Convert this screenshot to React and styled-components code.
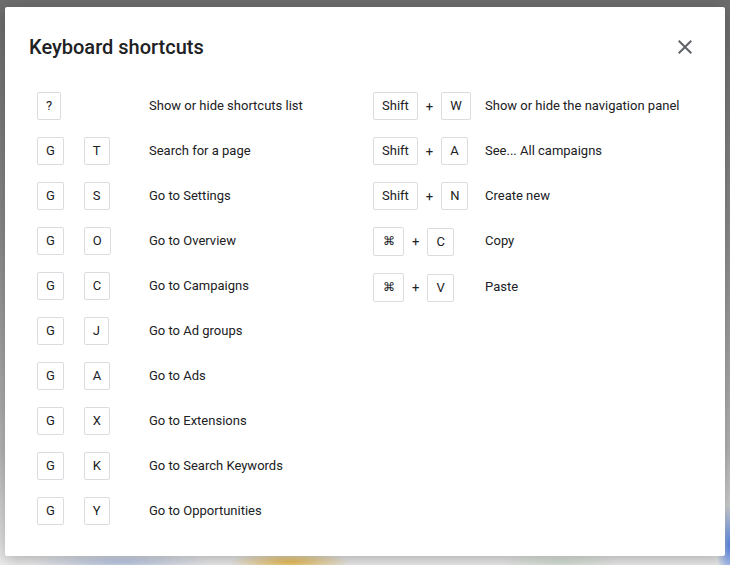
import React from 'react';
import styled, { createGlobalStyle } from 'styled-components';

const GlobalStyle = createGlobalStyle`
  html, body {
    margin: 0;
    padding: 0;
  }
  body {
    font-family: Roboto, "Liberation Sans", Arial, sans-serif;
    color: #202124;
  }
`;

// dimmed page behind the dialog
const Backdrop = styled.div`
  width: 730px;
  height: 565px;
  box-sizing: border-box;
  padding: 7px 5px 9px 5px;
  background:
    radial-gradient(ellipse 60px 10px at 290px 562px, rgba(236, 184, 60, 0.85), transparent),
    radial-gradient(ellipse 90px 10px at 120px 562px, rgba(170, 190, 230, 0.7), transparent),
    radial-gradient(ellipse 60px 10px at 560px 562px, rgba(200, 220, 200, 0.6), transparent),
    radial-gradient(ellipse 14px 40px at 730px 545px, rgba(80, 130, 230, 0.95), transparent),
    linear-gradient(to bottom, #6c6c6c 0, #8a8a8a 40%, #b8b8b8 80%, #e6e6e6 97%, #eeeeee 100%);
`;

const Dialog = styled.div`
  height: 100%;
  background: #fff;
  border-radius: 2px;
  box-shadow: 0 4px 16px rgba(0, 0, 0, 0.25);
  display: flex;
  flex-direction: column;
`;

const Header = styled.div`
  display: flex;
  align-items: center;
  justify-content: space-between;
  padding: 28px 28px 0 24px;
`;

const Title = styled.h1`
  margin: 0;
  font-size: 20px;
  line-height: 24px;
  font-weight: 500;
  color: #202124;
`;

const CloseButton = styled.button`
  width: 24px;
  height: 24px;
  padding: 0;
  border: none;
  background: none;
  color: #5f6368;
  cursor: pointer;
  display: flex;
  svg { display: block; }
`;

// two columns of shortcuts
const Body = styled.div`
  display: grid;
  grid-template-columns: 336px 1fr;
  align-items: start;
  padding: 33px 0 0 32px;
`;

const Column = styled.div`
  display: flex;
  flex-direction: column;
  gap: 17px;
`;

const Row = styled.div`
  display: flex;
  align-items: center;
`;

const Keys = styled.div`
  width: 112px;
  flex-shrink: 0;
  display: flex;
  align-items: center;
  gap: ${(p) => (p.$combo ? '0' : '20px')};
`;

const Key = styled.span`
  box-sizing: border-box;
  height: ${(p) => (p.$symbol ? '29px' : '28px')};
  min-width: ${(p) => (p.$symbol ? '31px' : '0')};
  padding: 0 8px;
  border: 1px solid #dadce0;
  border-radius: 2px;
  font-size: ${(p) => (p.$symbol ? '12px' : '13px')};
  line-height: ${(p) => (p.$symbol ? '27px' : '26px')};
  text-align: center;
  color: #202124;
`;

const Plus = styled.span`
  margin: 0 8px;
  font-size: 13px;
  color: #202124;
`;

const Label = styled.span`
  font-size: 13px;
  line-height: 16px;
  margin-top: -1px;
  color: #202124;
  white-space: nowrap;
`;

const sequences = [
  [['?'], 'Show or hide shortcuts list'],
  [['G', 'T'], 'Search for a page'],
  [['G', 'S'], 'Go to Settings'],
  [['G', 'O'], 'Go to Overview'],
  [['G', 'C'], 'Go to Campaigns'],
  [['G', 'J'], 'Go to Ad groups'],
  [['G', 'A'], 'Go to Ads'],
  [['G', 'X'], 'Go to Extensions'],
  [['G', 'K'], 'Go to Search Keywords'],
  [['G', 'Y'], 'Go to Opportunities'],
];

const combos = [
  ['Shift', 'W', 'Show or hide the navigation panel'],
  ['Shift', 'A', 'See... All campaigns'],
  ['Shift', 'N', 'Create new'],
  ['⌘', 'C', 'Copy'],
  ['⌘', 'V', 'Paste'],
];

const CloseIcon = () => (
  <svg width="24" height="24" viewBox="0 0 24 24" fill="currentColor">
    <path d="M19 6.41L17.59 5 12 10.59 6.41 5 5 6.41 10.59 12 5 17.59 6.41 19 12 13.41 17.59 19 19 17.59 13.41 12z" />
  </svg>
);

const App = () => {
  return (
    <Backdrop>
      <GlobalStyle />
      <Dialog>
        <Header>
          <Title>Keyboard shortcuts</Title>
          <CloseButton aria-label="Close"><CloseIcon /></CloseButton>
        </Header>
        <Body>
          <Column>
            {sequences.map(([keys, label]) => (
              <Row key={label}>
                <Keys>
                  {keys.map((k) => <Key key={k}>{k}</Key>)}
                </Keys>
                <Label>{label}</Label>
              </Row>
            ))}
          </Column>
          <Column>
            {combos.map(([mod, k, label]) => (
              <Row key={label}>
                <Keys $combo>
                  <Key $symbol={mod === '⌘'}>{mod}</Key>
                  <Plus>+</Plus>
                  <Key>{k}</Key>
                </Keys>
                <Label>{label}</Label>
              </Row>
            ))}
          </Column>
        </Body>
      </Dialog>
    </Backdrop>
  );
};

export default App;
